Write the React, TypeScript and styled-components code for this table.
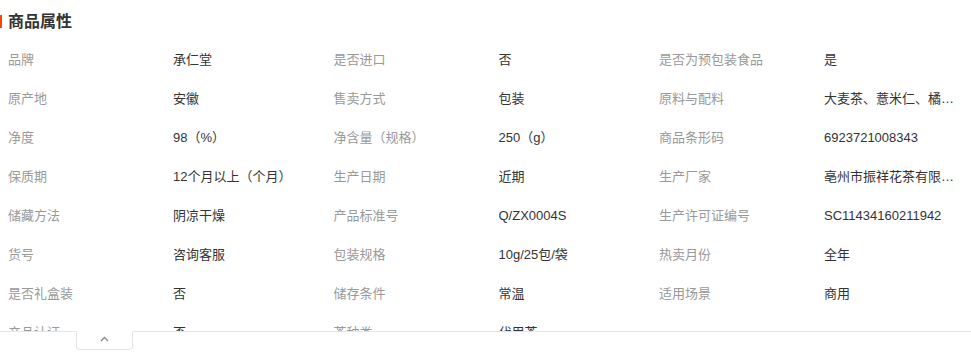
import React from 'react';
import styled, { createGlobalStyle } from 'styled-components';

const GlobalStyle = createGlobalStyle`
  html, body {
    margin: 0;
    padding: 0;
    background: #fff;
    overflow: hidden;
  }
  body {
    font-family: "Liberation Sans", "Noto Sans CJK SC", sans-serif;
  }
`;

const Wrapper = styled.div`
  width: 971px;
`;

const Header = styled.div`
  height: 40px;
  display: flex;
  align-items: center;
  padding-top: 3px;
  box-sizing: border-box;
`;

const Mark = styled.span`
  width: 2px;
  height: 13px;
  background: #ff4400;
  margin-right: 6px;
`;

const Title = styled.h3`
  margin: 0;
  font-size: 16px;
  font-weight: bold;
  color: #333;
  line-height: 20px;
`;

const Content = styled.div`
  max-height: 291px;
  overflow: hidden;
`;

const Row = styled.div`
  display: grid;
  grid-template-columns: 325.5px 325.5px 1fr;
  height: 39px;
  align-items: center;
`;

const Item = styled.div`
  display: flex;
  padding-left: 8px;
  font-size: 13px;
  line-height: 18px;
  min-width: 0;
`;

const Label = styled.span`
  width: 165px;
  flex-shrink: 0;
  color: #999;
  white-space: nowrap;
`;

const Value = styled.span`
  max-width: 131px;
  color: #333;
  white-space: nowrap;
  overflow: hidden;
  text-overflow: ellipsis;
`;

const Footer = styled.div`
  border-top: 1px solid #e5e5e5;
`;

const Toggle = styled.button`
  display: flex;
  justify-content: center;
  align-items: flex-start;
  margin: -1px 0 0 76px;
  width: 57px;
  height: 19px;
  padding: 4px 0 0;
  box-sizing: border-box;
  background: #fff;
  border: 1px solid #e5e5e5;
  border-top-color: #fff;
  border-radius: 0 0 4px 4px;
  cursor: pointer;
`;

type Pair = [string, string];

const rows: Pair[][] = [
  [['品牌', '承仁堂'], ['是否进口', '否'], ['是否为预包装食品', '是']],
  [['原产地', '安徽'], ['售卖方式', '包装'], ['原料与配料', '大麦茶、薏米仁、橘皮、玉米须、栀子']],
  [['净度', '98（%）'], ['净含量（规格）', '250（g）'], ['商品条形码', '6923721008343']],
  [['保质期', '12个月以上（个月）'], ['生产日期', '近期'], ['生产厂家', '亳州市振祥花茶有限公司']],
  [['储藏方法', '阴凉干燥'], ['产品标准号', 'Q/ZX0004S'], ['生产许可证编号', 'SC11434160211942']],
  [['货号', '咨询客服'], ['包装规格', '10g/25包/袋'], ['热卖月份', '全年']],
  [['是否礼盒装', '否'], ['储存条件', '常温'], ['适用场景', '商用']],
  [['产品认证', '否'], ['茶种类', '代用茶']],
];

const App: React.FC = () => {
  return (
    <Wrapper>
      <GlobalStyle />
      <Header>
        <Mark />
        <Title>商品属性</Title>
      </Header>
      <Content>
        {rows.map((row, i) => (
          <Row key={i}>
            {row.map(([label, value]) => (
              <Item key={label}>
                <Label>{label}</Label>
                <Value>{value}</Value>
              </Item>
            ))}
          </Row>
        ))}
      </Content>
      <Footer>
        <Toggle aria-label="收起">
          <svg width="9" height="6" viewBox="0 0 9 6">
            <polyline points="1,5 4.5,1.5 8,5" fill="none" stroke="#888" strokeWidth="1.3" />
          </svg>
        </Toggle>
      </Footer>
    </Wrapper>
  );
};

export default App;
